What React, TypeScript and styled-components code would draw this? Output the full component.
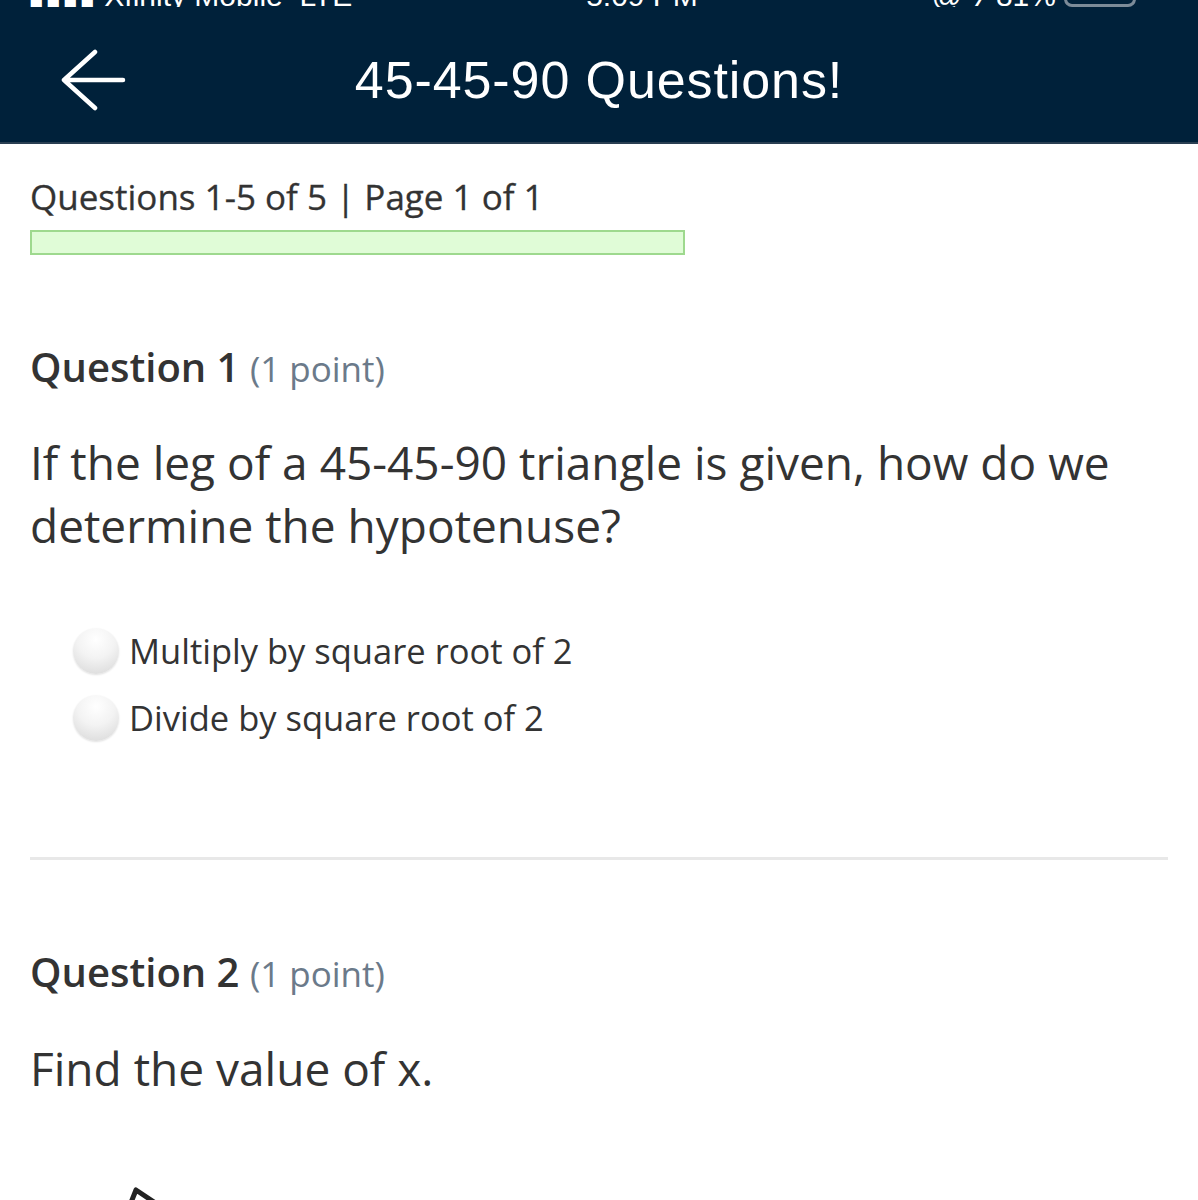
import React from "react";
import styled, { createGlobalStyle } from "styled-components";

const Global = createGlobalStyle`
  html, body { margin: 0; padding: 0; background: #ffffff; }
  body { font-family: "Open Sans", "Noto Sans", sans-serif; color: #333333; overflow: hidden; }
  * { box-sizing: border-box; }
`;

const Page = styled.div`
  width: 1198px;
  height: 1200px;
  overflow: hidden;
  display: flex;
  flex-direction: column;
`;

const Header = styled.header`
  flex: none;
  background: #00213a;
  height: 144px;
  border-bottom: 2px solid #2a3f52;
  display: flex;
  flex-direction: column;
`;

const StatusBar = styled.div`
  flex: none;
  height: 7px;
  overflow: hidden;
  display: flex;
  align-items: flex-end;
  justify-content: space-between;
  padding: 0 62px 0 28px;
  color: #ffffff;
  font-family: "Liberation Sans", Arial, sans-serif;
  font-size: 30px;
  line-height: 22px;
`;

const StatusItem = styled.span`
  display: flex;
  align-items: flex-end;
  gap: 8px;
  white-space: nowrap;
`;

const Battery = styled.span`
  display: inline-block;
  width: 72px;
  height: 30px;
  border: 3px solid #7c8b98;
  border-radius: 8px;
`;

const TitleRow = styled.div`
  flex: 1;
  display: flex;
  align-items: center;
  padding: 11px 0 0 58px;
  position: relative;
`;

const BackButton = styled.button`
  background: none;
  border: none;
  padding: 0;
  width: 70px;
  height: 64px;
  display: flex;
  align-items: center;
  justify-content: center;
  cursor: pointer;
`;

const Title = styled.h1`
  position: absolute;
  left: 0;
  right: 0;
  top: 11px;
  bottom: 0;
  display: flex;
  align-items: center;
  justify-content: center;
  margin: 0;
  color: #ffffff;
  font-family: "Liberation Sans", Arial, sans-serif;
  font-weight: 400;
  font-size: 52px;
  letter-spacing: 0.9px;
  pointer-events: none;
`;

const Content = styled.main`
  padding: 29px 30px 0 30px;
  display: flex;
  flex-direction: column;
`;

const PageInfo = styled.div`
  font-size: 35px;
  line-height: 48px;
  color: #333333;
  font-weight: 500;
  -webkit-text-stroke: 0.3px #333333;
`;

const Progress = styled.div`
  margin-top: 9px;
  width: 655px;
  height: 25px;
  border: 2px solid #9ed98e;
  background: #e0fcd7;
`;

const Question = styled.section<{ $divider?: boolean }>`
  display: flex;
  flex-direction: column;
  padding-bottom: ${(p) => (p.$divider ? "116px" : "0")};
  border-bottom: ${(p) => (p.$divider ? "3px solid #e8e8e8" : "none")};
`;

const QHead = styled.h2<{ $top: number }>`
  margin: ${(p) => p.$top}px 0 0 0;
  font-size: 40px;
  line-height: 54px;
  font-weight: 600;
  color: #333333;
`;

const Points = styled.span`
  font-size: 35px;
  font-weight: 400;
  color: #6b7a8a;
`;

const QText = styled.p<{ $top: number }>`
  margin: ${(p) => p.$top}px 0 0 0;
  font-size: 46px;
  line-height: 63px;
  color: #333333;
  width: 1120px;
`;

const Options = styled.div`
  margin: 70px 0 0 43px;
  display: flex;
  flex-direction: column;
  gap: 20px;
`;

const Option = styled.label`
  display: flex;
  align-items: center;
  gap: 10px;
  font-size: 34.5px;
  line-height: 47px;
  color: #333333;
`;

const Radio = styled.span`
  width: 46px;
  height: 46px;
  border-radius: 50%;
  background: radial-gradient(circle at 50% 25%, #ffffff 0%, #f3f3f3 45%, #d6d6d6 100%);
  box-shadow: 0 1px 2px rgba(0, 0, 0, 0.12);
  flex: none;
`;

const Figure = styled.div`
  margin-top: 70px;
  height: 60px;
`;

const options = ["Multiply by square root of 2", "Divide by square root of 2"];

export default function App() {
  return (
    <Page>
      <Global />
      <Header>
        <StatusBar>
          <StatusItem>▮▮▮▮ Xfinity Mobile&nbsp;&nbsp;LTE</StatusItem>
          <StatusItem>5:09 PM</StatusItem>
          <StatusItem>
            @ ⁊ 81% <Battery />
          </StatusItem>
        </StatusBar>
        <TitleRow>
          <BackButton aria-label="Back">
            <svg width="66" height="62" viewBox="0 0 66 62" fill="none">
              <path d="M35 3 L4 31 L35 59 M4 31 H63" stroke="#ffffff" strokeWidth="4.5" strokeLinecap="round" strokeLinejoin="round" />
            </svg>
          </BackButton>
          <Title>45-45-90 Questions!</Title>
        </TitleRow>
      </Header>
      <Content>
        <PageInfo>Questions 1-5 of 5 | Page 1 of 1</PageInfo>
        <Progress />
        <Question $divider>
          <QHead $top={85}>
            Question 1 <Points>(1 point)</Points>
          </QHead>
          <QText $top={35}>If the leg of a 45-45-90 triangle is given, how do we determine the hypotenuse?</QText>
          <Options>
            {options.map((o) => (
              <Option key={o}>
                <Radio />
                {o}
              </Option>
            ))}
          </Options>
        </Question>
        <Question>
          <QHead $top={85}>
            Question 2 <Points>(1 point)</Points>
          </QHead>
          <QText $top={36}>Find the value of x.</QText>
          <Figure>
            <svg width="200" height="60" viewBox="0 0 200 60">
              <path d="M106 20 L98 40 M106 20 L124 32" stroke="#222" strokeWidth="5" fill="none" strokeLinecap="round" />
            </svg>
          </Figure>
        </Question>
      </Content>
    </Page>
  );
}
